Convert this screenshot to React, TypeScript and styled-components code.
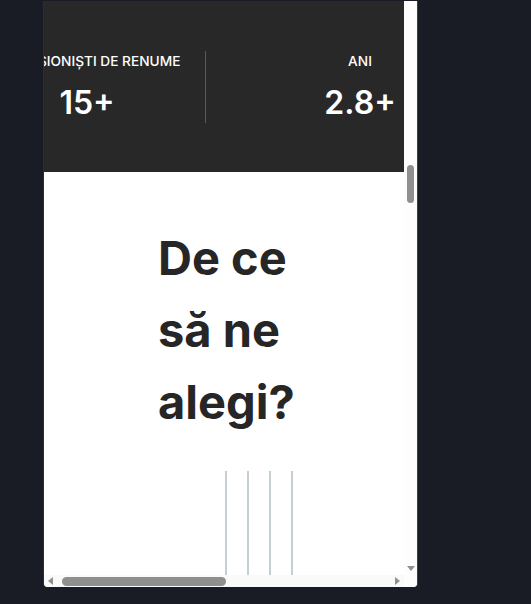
import React from 'react'
import styled, { createGlobalStyle } from 'styled-components'

const GlobalStyle = createGlobalStyle`
  html, body {
    margin: 0;
    padding: 0;
    background: #191c25;
    font-family: Inter, "Noto Sans", sans-serif;
  }
`

const stats = [
  { label: 'PROFESIONIȘTI DE RENUME', value: '15+', width: 236 },
  { label: 'ANI', value: '2.8+', width: 308 },
]

const Page = styled.div`
  display: flex;
  height: 604px;
  padding: 1px 0 0 44px;
  box-sizing: border-box;
`

const Window = styled.div`
  width: 373px;
  height: 586px;
  background: #ffffff;
  border-radius: 0 0 4px 4px;
  overflow: hidden;
  display: grid;
  grid-template-columns: 360px 13px;
  grid-template-rows: 574px 12px;
  box-shadow: -1px 0 0 #2a2d36, 1px 0 0 #3a3d46;
`

const Viewport = styled.div`
  overflow: hidden;
  display: flex;
  flex-direction: column;
`

const StatsBand = styled.section`
  flex: 0 0 171px;
  background: #282828;
  display: flex;
  align-items: center;
  margin-left: -75px;
  width: 620px;
`

const Stat = styled.div<{ $width: number }>`
  flex: 0 0 ${({ $width }) => $width}px;
  display: flex;
  flex-direction: column;
  align-items: center;
  gap: 13px;
  color: #ffffff;
  white-space: nowrap;
`

const StatLabel = styled.div`
  font-size: 13.7px;
  line-height: 20px;
  font-weight: 500;
`

const StatValue = styled.div`
  font-size: 32px;
  line-height: 38px;
  font-weight: 600;
`

const Divider = styled.div`
  flex: 0 0 1px;
  height: 72px;
  background: #5a5a5a;
`

const Heading = styled.h2`
  margin: 50px 0 0 114px;
  width: 160px;
  font-size: 47px;
  line-height: 72px;
  font-weight: 700;
  color: #262626;
`

const Lines = styled.div`
  display: flex;
  gap: 20px;
  margin: 33px 0 0 181px;
  height: 140px;
`

const Line = styled.span`
  width: 2px;
  background: #c3cfd2;
`

const VTrack = styled.div`
  background: #fdfdfd;
  display: flex;
  flex-direction: column;
  align-items: center;
  justify-content: space-between;
  padding-bottom: 4px;
  box-sizing: border-box;
`

const VThumb = styled.div<{ $offset: number }>`
  margin-top: ${({ $offset }) => $offset}px;
  width: 7px;
  height: 38px;
  border-radius: 4px;
  background: #8f8f8f;
`

const HTrack = styled.div`
  background: #fafafa;
  display: flex;
  align-items: center;
  justify-content: space-between;
  padding: 0 4px 0 4px;
`

const HThumb = styled.div<{ $offset: number; $size: number }>`
  margin-left: ${({ $offset }) => $offset}px;
  width: ${({ $size }) => $size}px;
  height: 9px;
  border-radius: 5px;
  background: #8f8f8f;
  margin-right: auto;
`

const Corner = styled.div`
  background: #fdfdfd;
`

const Arrow = styled.span<{ $dir: 'down' | 'left' | 'right' }>`
  width: 0;
  height: 0;
  border-style: solid;
  border-color: transparent;
  ${({ $dir }) =>
    $dir === 'down'
      ? 'border-width: 5px 4px 0 4px; border-top-color: #8f8f8f;'
      : $dir === 'left'
      ? 'border-width: 4px 5px 4px 0; border-right-color: #8f8f8f;'
      : 'border-width: 4px 0 4px 5px; border-left-color: #8f8f8f;'}
`

export default function App() {
  return (
    <>
      <GlobalStyle />
      <Page>
        <Window>
          <Viewport>
            <StatsBand>
              {stats.map((s, i) => (
                <React.Fragment key={s.label}>
                  {i > 0 && <Divider />}
                  <Stat $width={s.width}>
                    <StatLabel>{s.label}</StatLabel>
                    <StatValue>{s.value}</StatValue>
                  </Stat>
                </React.Fragment>
              ))}
            </StatsBand>
            <Heading>De ce să ne alegi?</Heading>
            <Lines>
              <Line />
              <Line />
              <Line />
              <Line />
            </Lines>
          </Viewport>
          <VTrack>
            <VThumb $offset={164} />
            <Arrow $dir="down" />
          </VTrack>
          <HTrack>
            <Arrow $dir="left" />
            <HThumb $offset={9} $size={164} />
            <Arrow $dir="right" />
          </HTrack>
          <Corner />
        </Window>
      </Page>
    </>
  )
}
